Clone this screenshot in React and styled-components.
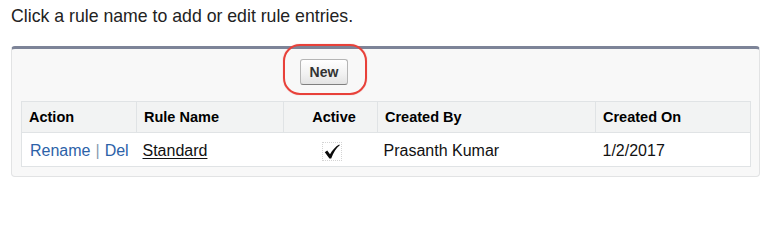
import styled, { createGlobalStyle } from 'styled-components';

const GlobalStyle = createGlobalStyle`
    body{
        margin: 0;
        background-color: #FFFFFF;
        font-family: "Liberation Sans", Arial, sans-serif;
        color: #222222;
    }
`;

export default function App(){
    return(
        <Page>
            <GlobalStyle/>
            <Intro>Click a rule name to add or edit rule entries.</Intro>
            <Panel>
                <ButtonRow>
                    <Highlight>
                        <Button>New</Button>
                        <Ring/>
                    </Highlight>
                </ButtonRow>

                <List>
                    <colgroup>
                        <col style={{ width: '115px' }}/>
                        <col style={{ width: '147px' }}/>
                        <col style={{ width: '94px' }}/>
                        <col style={{ width: '218px' }}/>
                        <col/>
                    </colgroup>
                    <thead>
                        <tr>
                            <Head>Action</Head>
                            <Head>Rule Name</Head>
                            <Head $center>Active</Head>
                            <Head>Created By</Head>
                            <Head>Created On</Head>
                        </tr>
                    </thead>
                    <tbody>
                        <tr>
                            <Cell $pad={8}>
                                <Link>Rename</Link>
                                <Sep>|</Sep>
                                <Link>Del</Link>
                            </Cell>
                            <Cell $pad={6}><RuleLink>Standard</RuleLink></Cell>
                            <Cell $center>
                                <Check>
                                    <svg width="16" height="15" viewBox="0 0 16 15">
                                        <path d="M0.8 8.2 L3.2 6.6 L6 10.2 C8.4 6 11.4 2.6 15.2 0.4 L15.8 1.2 C12.4 4 9.4 8.2 7.2 14.4 L5.4 14.4 Z" fill="#0A0A0A"/>
                                    </svg>
                                </Check>
                            </Cell>
                            <Cell $pad={6}>Prasanth Kumar</Cell>
                            <Cell $pad={7}>1/2/2017</Cell>
                        </tr>
                    </tbody>
                </List>
            </Panel>
        </Page>
    );
}

const Page = styled.div`
    width: 768px;
    height: 201px;
    box-sizing: border-box;
    padding: 7px 8px 0 11px;
`;

const Intro = styled.div`
    font-size: 17.7px;
    line-height: 18px;
    color: #222222;
`;

const Panel = styled.div`
    width: 749px;
    height: 131px;
    box-sizing: border-box;
    margin-top: 21px;
    padding: 10px 9px 0 9px;
    background-color: #F8F8F8;
    border: 1px solid #E2E3E4;
    border-top: 3px solid #7D8498;
    border-radius: 4px;
`;

const ButtonRow = styled.div`
    height: 26px;
    padding-left: 279px;
    display: flex;
    align-items: center;
`;

const Highlight = styled.div`
    position: relative;
    display: flex;
`;

const Ring = styled.div`
    position: absolute;
    left: -17px;
    top: -15px;
    width: 84px;
    height: 51px;
    box-sizing: border-box;
    border: 2px solid #E8413A;
    border-radius: 17px;
    box-shadow: 0 0 1px rgba(232, 65, 58, 0.6);
    pointer-events: none;
`;

const Button = styled.button`
    width: 48px;
    height: 26px;
    padding: 0;
    border: 1px solid #B5B5B5;
    border-bottom-color: #7F7F7F;
    border-radius: 3px;
    background: linear-gradient(#FFFFFF, #F1F1F1 60%, #E3E3E3);
    font-family: "Liberation Sans", Arial, sans-serif;
    font-size: 14px;
    font-weight: bold;
    color: #333333;
`;

const List = styled.table`
    width: 730px;
    margin-top: 16px;
    border-collapse: collapse;
    table-layout: fixed;
    background-color: #FFFFFF;
    border: 1px solid #E0E3E5;
`;

const Head = styled.th`
    height: 31px;
    padding: 0 0 0 7px;
    box-sizing: border-box;
    text-align: ${p => (p.$center ? 'center' : 'left')};
    background-color: #F2F3F3;
    border-right: 1px solid #E0E3E5;
    border-bottom: 1px solid #E0E3E5;
    font-size: 14.5px;
    font-weight: bold;
    color: #000000;
`;

const Cell = styled.td`
    height: 34px;
    padding: 3px 0 0 ${p => (p.$pad || 0)}px;
    box-sizing: border-box;
    text-align: ${p => (p.$center ? 'center' : 'left')};
    font-size: 16px;
    color: #111111;
    white-space: nowrap;
`;

const Link = styled.span`
    color: #2C62A8;
`;

const Sep = styled.span`
    color: #8A9BB0;
    margin: 0 5px;
`;

const RuleLink = styled.span`
    color: #111111;
    text-decoration: underline;
    text-underline-offset: 2px;
`;

const Check = styled.span`
    display: inline-flex;
    align-items: center;
    justify-content: center;
    width: 18px;
    height: 17px;
    margin-left: 2px;
    vertical-align: middle;
    border: 1px dotted #D4D4D4;
`;
